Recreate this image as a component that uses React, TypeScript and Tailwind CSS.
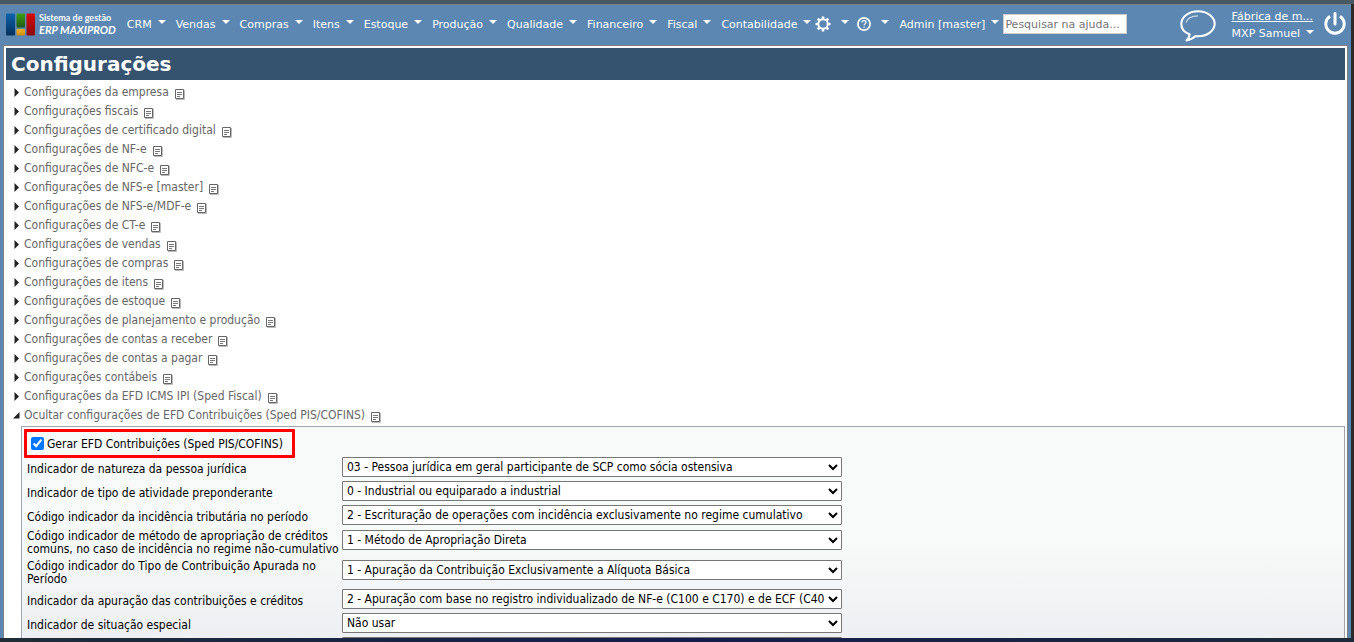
import React, { useState } from 'react';

const menus = ['CRM', 'Vendas', 'Compras', 'Itens', 'Estoque', 'Produção', 'Qualidade', 'Financeiro', 'Fiscal', 'Contabilidade'];

const sections = [
  'Configurações da empresa',
  'Configurações fiscais',
  'Configurações de certificado digital',
  'Configurações de NF-e',
  'Configurações de NFC-e',
  'Configurações de NFS-e [master]',
  'Configurações de NFS-e/MDF-e',
  'Configurações de CT-e',
  'Configurações de vendas',
  'Configurações de compras',
  'Configurações de itens',
  'Configurações de estoque',
  'Configurações de planejamento e produção',
  'Configurações de contas a receber',
  'Configurações de contas a pagar',
  'Configurações contábeis',
  'Configurações da EFD ICMS IPI (Sped Fiscal)',
];

interface Field {
  id: string;
  label: string;
  value: string;
  tall?: boolean;
}

const fields: Field[] = [
  { id: 'natureza', label: 'Indicador de natureza da pessoa jurídica', value: '03 - Pessoa jurídica em geral participante de SCP como sócia ostensiva' },
  { id: 'atividade', label: 'Indicador de tipo de atividade preponderante', value: '0 - Industrial ou equiparado a industrial' },
  { id: 'incidencia', label: 'Código indicador da incidência tributária no período', value: '2 - Escrituração de operações com incidência exclusivamente no regime cumulativo' },
  { id: 'metodo', label: 'Código indicador de método de apropriação de créditos comuns, no caso de incidência no regime não-cumulativo', value: '1 - Método de Apropriação Direta', tall: true },
  { id: 'contribuicao', label: 'Código indicador do Tipo de Contribuição Apurada no Período', value: '1 - Apuração da Contribuição Exclusivamente a Alíquota Básica', tall: true },
  { id: 'apuracao', label: 'Indicador da apuração das contribuições e créditos', value: '2 - Apuração com base no registro individualizado de NF-e (C100 e C170) e de ECF (C400)' },
  { id: 'situacao', label: 'Indicador de situação especial', value: 'Não usar' },
];

function Caret() {
  return (
    <svg width="8" height="4" viewBox="0 0 8 4" className="mb-1 shrink-0" aria-hidden="true">
      <path d="M0 0h8L4 4z" fill="#fff" />
    </svg>
  );
}

function DocIcon() {
  return (
    <svg width="10" height="11" viewBox="0 0 10 11" className="mt-1 shrink-0" fill="none" aria-hidden="true">
      <path d="M.5.5h8v9h-8z" fill="#fff" stroke="#666" />
      <path d="M2 3.5h5M2 5.5h5M2 7.5h3" stroke="#777" />
      <path d="M9.500 1v9.500H1" stroke="#bbb" />
    </svg>
  );
}

function Logo() {
  return (
    <a href="#" className="flex items-center gap-[3px] text-white">
      <svg width="30" height="23" viewBox="0 0 30 23" aria-hidden="true">
        <defs>
          <linearGradient id="lb" x2="0" y2="1"><stop stopColor="#0b63ad" /><stop offset="1" stopColor="#06305c" /></linearGradient>
          <linearGradient id="lg" x2="0" y2="1"><stop stopColor="#3f9f16" /><stop offset="1" stopColor="#1f5a10" /></linearGradient>
          <linearGradient id="lr" x2="0" y2="1"><stop stopColor="#d90808" /><stop offset="1" stopColor="#8c0a0a" /></linearGradient>
          <linearGradient id="ly" x2="0" y2="1"><stop stopColor="#f5b01c" /><stop offset="1" stopColor="#c98a18" /></linearGradient>
        </defs>
        <rect x="0" y="0.500" width="9" height="22" rx="1" fill="url(#lb)" />
        <rect x="10.500" y="0.500" width="8.500" height="14" rx="1" fill="url(#lg)" />
        <rect x="10.500" y="16" width="8.500" height="6.500" rx="1" fill="url(#ly)" />
        <rect x="20.500" y="0.500" width="8.500" height="22" rx="1" fill="url(#lr)" />
      </svg>
      <span className="flex flex-col font-['Lato',sans-serif] font-bold whitespace-nowrap">
        <span className="text-[9px] leading-3">Sistema de gestão</span>
        <span className="text-[11px] leading-3 italic">ERP MAXIPROD</span>
      </span>
    </a>
  );
}

function GearIcon() {
  return (
    <svg width="16" height="16" viewBox="0 0 16 16" fill="none" stroke="#fff" aria-hidden="true">
      <circle cx="8" cy="8" r="4.700" strokeWidth="1.900" />
      <path d="M8 .5v2.500M8 13v2.500M.5 8H3M13 8h2.500M2.700 2.700l1.800 1.800M11.500 11.500l1.800 1.800M2.700 13.300l1.800-1.800M11.500 4.500l1.800-1.800" strokeWidth="2.600" />
    </svg>
  );
}

function HelpIcon() {
  return (
    <svg width="14" height="14" viewBox="0 0 14 14" fill="none" stroke="#fff" aria-hidden="true">
      <circle cx="7" cy="7" r="6.100" strokeWidth="1.700" />
      <path d="M5 5.600C5 4.300 5.900 3.700 7 3.700s2 .7 2 1.700c0 1.400-1.900 1.400-1.900 2.900" strokeWidth="1.200" />
      <path d="M7.100 9.500v1.300" strokeWidth="1.300" />
    </svg>
  );
}

function Header() {
  return (
    <header className="flex h-10 shrink-0 items-center bg-[#5b87b2] pr-[5px] pb-0.5 pl-1.5 font-['DejaVu_Sans',Verdana,sans-serif] text-[11px] text-white">
      <Logo />
      <nav className="ml-[11px] flex items-center gap-2.5 whitespace-nowrap">
        {menus.map((menu) => (
          <button key={menu} type="button" className="flex items-center gap-1.5">
            {menu}
            <Caret />
          </button>
        ))}
        <button type="button" aria-label="Ferramentas" className="-ml-1.5 flex items-center gap-2.5">
          <GearIcon />
          <Caret />
        </button>
        <button type="button" aria-label="Ajuda" className="-ml-0.5 flex items-center gap-2.5">
          <HelpIcon />
          <Caret />
        </button>
        <button type="button" className="flex items-center gap-1.5">
          Admin [master]
          <Caret />
        </button>
      </nav>
      <input
        type="text"
        aria-label="Pesquisar na ajuda"
        placeholder="Pesquisar na ajuda..."
        className="ml-1 h-5 w-[124px] border border-[#ccc] bg-white px-px text-black placeholder:text-[#757575]"
      />
      <div className="ml-auto flex items-center">
        <button type="button" aria-label="Chat" className="pt-1">
          <svg width="36" height="32" viewBox="0 0 36 32" fill="none" stroke="#fff" aria-hidden="true">
            <path d="M9.500 24.300C4.500 22.500 1.300 18.500 1.300 13.800 1.300 7 8.700 1.300 18 1.300s16.700 5.700 16.700 12.500S27.300 26.200 18 26.200c-.9 0-1.700 0-2.500-.1-2 2-5 3.800-9 4.300 2.300-1.500 3-3.500 3-6.100z" strokeWidth="2.100" strokeLinejoin="round" />
            <path d="M6 12.500C7 8.800 11.500 6 18 5.800" stroke="#c9d9e8" strokeWidth="1.200" />
          </svg>
        </button>
        <div className="ml-4 flex flex-col items-start pt-0.5 whitespace-nowrap">
          <a href="#" className="leading-[17px] underline">Fábrica de m...</a>
          <button type="button" className="flex items-center gap-1.5 leading-[17px]">
            MXP Samuel
            <Caret />
          </button>
        </div>
        <button type="button" aria-label="Sair" className="ml-2.5">
          <svg width="22" height="24" viewBox="0 0 22 24" fill="none" stroke="#fff" strokeWidth="3" aria-hidden="true">
            <path d="M6 4.300a9.200 9.200 0 1 0 10 0" />
            <path d="M11 1.500V12" strokeLinecap="round" />
          </svg>
        </button>
      </div>
    </header>
  );
}

function SectionLink({ label, open = false }: { label: string; open?: boolean }) {
  return (
    <button type="button" className="flex h-[19px] items-center text-[#666]">
      <svg width="7" height="9" viewBox="0 0 7 9" className="mr-1 shrink-0" fill="#222" aria-hidden="true">
        {open ? <path d="M6.500 1v6.500H0z" /> : <path d="M1.500 0l4.500 4.500L1.500 9z" />}
      </svg>
      <span className="mr-1.5">{label}</span>
      <DocIcon />
    </button>
  );
}

export default function App() {
  const [generate, setGenerate] = useState(true);

  return (
    <div className="flex h-screen flex-col overflow-hidden bg-[#2b2b2b] font-['DejaVu_Sans_Condensed','DejaVu_Sans',Verdana,sans-serif] text-xs leading-[13px]">
      <div className="h-1 shrink-0 bg-[#455863]" />
      <div className="mr-[3px] flex min-h-0 flex-1 flex-col border-t border-[#808080] bg-[#5b87b2]">
        <Header />
        <main className="mx-[3px] min-h-0 flex-1 overflow-hidden border border-b-0 border-[#808080] bg-white px-px pt-0.5">
          <h1 className="mx-px mb-[3px] bg-[#35526f] pl-[5px] font-['DejaVu_Sans',Verdana,sans-serif] text-xl leading-8 font-bold text-white">Configurações</h1>
          <div className="flex flex-col items-start pl-2">
            {sections.map((section) => (
              <SectionLink key={section} label={section} />
            ))}
            <SectionLink label="Ocultar configurações de EFD Contribuições (Sped PIS/COFINS)" open />
          </div>
          <section className="mt-px mr-px ml-4 border border-[#a0a5b0] bg-linear-to-b from-[#f8faf9] from-0% via-[#f8faf9] via-50% to-[#eeeff2] to-90% px-0.5 pt-0.5 text-black">
            <label className="flex h-[29px] w-[271px] items-center gap-[3px] rounded-[1px] border-3 border-[#f00] pl-1 whitespace-nowrap">
              <input type="checkbox" checked={generate} onChange={() => setGenerate(!generate)} className="size-[13px] shrink-0 accent-[#0075ff]" />
              <span className="pt-0.5">Gerar EFD Contribuições (Sped PIS/COFINS)</span>
            </label>
            <div className="-mt-[3px] pl-[3px]">
              {fields.map((field) => (
                <div key={field.id} className={field.tall ? 'flex h-[30px] pt-[3px]' : 'flex h-6 pt-0.5'}>
                  <label htmlFor={field.id} className={field.tall ? 'w-[315px] shrink-0' : 'w-[315px] shrink-0 pt-1.5'}>
                    {field.label}
                  </label>
                  <select id={field.id} className="h-5 w-[500px] rounded-[1px] border border-[#767676] bg-white">
                    <option>{field.value}</option>
                  </select>
                </div>
              ))}
              <div className="flex h-6 pt-0.5 pl-[315px]">
                <select aria-label="Outro indicador" className="h-5 w-[500px] rounded-[1px] border border-[#767676] bg-white" />
              </div>
            </div>
          </section>
        </main>
      </div>
      <footer className="h-1 shrink-0 bg-linear-to-r from-[#1f2c36] via-[#141b4d] to-[#1c2a38]" />
    </div>
  );
}
